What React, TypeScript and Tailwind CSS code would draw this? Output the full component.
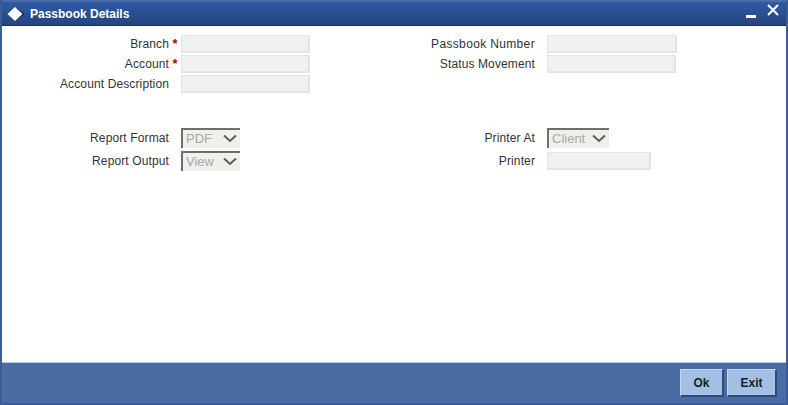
const font = { fontFamily: '"Liberation Sans", Arial, sans-serif' };

function Field({ label, required, width = 'w-[129px]', tracking = 'tracking-[0.12px]' }: { label: string; required?: boolean; width?: string; tracking?: string }) {
  return (
    <div className="flex h-[20px] items-center">
      <span className={`w-[167px] shrink-0 text-right text-[12px] text-[#333] ${tracking}`}>{label}</span>
      <span className="w-[12px] shrink-0 text-center text-[13px] font-bold leading-[12px] text-[#c00000]">{required ? '*' : ''}</span>
      <div className={`h-[18px] border-t border-l border-r-2 border-b-2 border-[#e4e4e4] bg-[#f1f1f1] ${width}`} />
    </div>
  );
}

function Select({ label, value, width }: { label: string; value: string; width: string }) {
  return (
    <div className="flex h-[23px] items-center">
      <span className="w-[167px] shrink-0 text-right text-[12px] tracking-[0.12px] text-[#333]">{label}</span>
      <span className="w-[12px] shrink-0" />
      <div className={`flex h-[20px] items-center justify-between border-t-2 border-l-2 border-t-[#6e6e6e] border-l-[#6e6e6e] bg-[#f0efe9] pl-[3px] pr-[3px] ${width}`}>
        <span className="text-[13px] text-[#a8a8a8]">{value}</span>
        <svg width="14" height="9" viewBox="0 0 14 9" fill="none">
          <path d="M1 1.5 L7 7 L13 1.5" stroke="#5a5d61" strokeWidth="2" />
        </svg>
      </div>
    </div>
  );
}

export default function App() {
  return (
    <div className="flex h-[405px] w-[788px] flex-col overflow-hidden border-2 border-t-0 border-[#3a5c99] bg-white" style={font}>
      {/* Title bar */}
      <div className="flex h-[26px] shrink-0 items-center justify-between border-t-2 border-b border-t-[#4a6ca6] border-b-[#16305f] bg-gradient-to-b from-[#2f5ba4] to-[#25457f] pl-[5px] pr-[7px]">
        <div className="flex items-center gap-[7px]">
          <svg width="18" height="16" viewBox="0 0 18 16">
            <path d="M9 1.5 L17.5 8 L9 14.5 L9 14.5 Z" fill="#10264f" />
            <path d="M8 1 L15.5 8 L8 15 L0.5 8 Z" fill="#fff" />
          </svg>
          <span className="-ml-[2px] text-[12px] font-bold text-white">Passbook Details</span>
        </div>
        <div className="flex items-start gap-[11px]">
          <div className="mt-[6px] h-[3px] w-[10px] bg-white" />
          <svg width="12" height="12" viewBox="0 0 12 12" className="-mt-[5px]">
            <path d="M1 1 L11 11 M11 1 L1 11" stroke="#fff" strokeWidth="2" />
          </svg>
        </div>
      </div>

      {/* Form */}
      <div className="flex-1">
        <div className="flex pt-[8px]">
          <div className="w-[366px]">
            <Field label="Branch" required />
            <Field label="Account" required />
            <Field label="Account Description" />
          </div>
          <div>
            <Field label="Passbook Number" width="w-[130px]" tracking="tracking-[0.35px]" />
            <Field label="Status Movement" />
          </div>
        </div>
        <div className="flex pt-[32px]">
          <div className="w-[366px]">
            <Select label="Report Format" value="PDF" width="w-[59px]" />
            <Select label="Report Output" value="View" width="w-[59px]" />
          </div>
          <div>
            <Select label="Printer At" value="Client" width="w-[62px]" />
            <div className="pt-[2px]">
              <Field label="Printer" width="w-[104px]" />
            </div>
          </div>
        </div>
      </div>

      {/* Footer */}
      <div className="flex h-[41px] shrink-0 items-center justify-end gap-[3px] border-t border-[#b4c6e4] bg-[#4a6ba3] pr-[9px]">
        <button className="h-[28px] w-[44px] border-t border-l border-r-2 border-b-2 border-t-[#c3d6ef] border-l-[#c3d6ef] border-r-[#2f4a7a] border-b-[#2f4a7a] bg-[#a3c0e4] text-[12px] font-bold text-[#1c1c1c]">Ok</button>
        <button className="h-[28px] w-[50px] border-t border-l border-r-2 border-b-2 border-t-[#c3d6ef] border-l-[#c3d6ef] border-r-[#2f4a7a] border-b-[#2f4a7a] bg-[#a3c0e4] text-[12px] font-bold text-[#1c1c1c]">Exit</button>
      </div>
    </div>
  );
}
